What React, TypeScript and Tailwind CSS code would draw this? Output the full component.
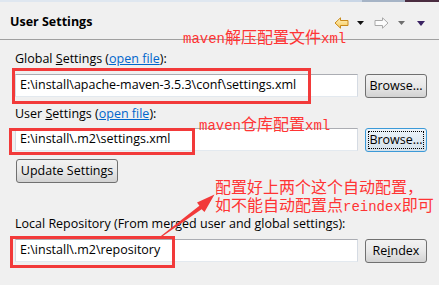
import React from 'react';

function Mono({ children }: { children: React.ReactNode }) {
    return <span className="font-['Liberation_Mono',monospace] text-[14px] leading-[18px]">{children}</span>;
}

function Note({ className, children }: { className: string; children: React.ReactNode }) {
    return (
        <div
            className={`absolute whitespace-nowrap text-[16px] leading-[18px] text-[#ff3434] font-['Noto_Sans_CJK_SC',sans-serif] ${className}`}
        >
            {children}
        </div>
    );
}

function Field({ value }: { value: string }) {
    return (
        <div className="flex-1 h-[23px] bg-white border border-[#abadb3] border-x-[#d5dbe3] border-b-[#e3e9ef] flex items-center pl-[4px] whitespace-nowrap overflow-hidden">
            {value}
        </div>
    );
}

function Button({ label, focused, className = 'w-[62px]' }: { label: React.ReactNode; focused?: boolean; className?: string }) {
    if (focused) {
        return (
            <div className={`h-[24px] ${className} rounded-[3px] border border-[#3c9ad8] bg-gradient-to-b from-[#edf4fa] to-[#d3e0ea] p-[2px]`}>
                <div className="h-full w-full border border-dotted border-black flex items-center justify-center">{label}</div>
            </div>
        );
    }
    return (
        <div
            className={`h-[24px] ${className} rounded-[3px] border border-[#707070] bg-gradient-to-b from-[#f2f2f2] via-[#e8e8e8] to-[#d2d2d2] flex items-center justify-center`}
        >
            {label}
        </div>
    );
}

function Label({ children, className = '' }: { children: React.ReactNode; className?: string }) {
    return <div className={`leading-[16px] ${className}`}>{children}</div>;
}

const Link = () => <span className="text-[#0066cc] underline">open file</span>;

export default function App() {
    return (
        <div className="relative w-[439px] h-[285px] overflow-hidden bg-[#f0f0f0] text-black text-[12.5px] font-['Open_Sans',sans-serif]">
            {/* window edge strip */}
            <div className="flex h-[2px]">
                <div className="w-[340px] bg-[#dfe7f0]" />
                <div className="w-[22px] bg-[#c9d6e6]" />
                <div className="w-[43px] bg-[#a6b4c6]" />
                <div className="flex-1 bg-[#4a2c40]" />
            </div>

            <div className="h-[38px] border-b border-[#a0a0a0] flex items-center justify-between pl-[10px] pr-[14px]">
                <span className="font-bold text-[12.5px] mt-[4px]">User Settings</span>
                <div className="flex items-center mt-[5px]">
                    <svg width="15" height="12" viewBox="0 0 15 12">
                        <defs>
                            <linearGradient id="y" x1="0" y1="0" x2="0" y2="1">
                                <stop offset="0" stopColor="#fff3c4" />
                                <stop offset="1" stopColor="#f6c858" />
                            </linearGradient>
                        </defs>
                        <path d="M1 6 L6.5 0.8 V3.5 H14 V8.5 H6.5 V11.2 Z" fill="url(#y)" stroke="#c98a1c" strokeWidth="1" strokeLinejoin="round" />
                    </svg>
                    <svg width="7" height="4" viewBox="0 0 7 4" className="ml-[8px]">
                        <path d="M0 0 H7 L3.5 4 Z" fill="#111" />
                    </svg>
                    <svg width="15" height="12" viewBox="0 0 15 12" className="ml-[10px]">
                        <path d="M14 6 L8.5 0.8 V3.5 H1 V8.5 H8.5 V11.2 Z" fill="#fcfcfc" stroke="#a8a8a8" strokeWidth="1" strokeLinejoin="round" />
                    </svg>
                    <svg width="7" height="4" viewBox="0 0 7 4" className="ml-[9px]">
                        <path d="M0 0 H7 L3.5 4 Z" fill="#6e6e6e" />
                    </svg>
                    <svg width="8" height="5" viewBox="0 0 8 5" className="ml-[12px]">
                        <path d="M0 0 H8 L4 5 Z" fill="#3b2363" />
                    </svg>
                </div>
            </div>

            <div className="pl-[15px] pr-[12px] flex flex-col">
                <Label className="mt-[11px]">
                    Global <u>S</u>ettings (<Link />):
                </Label>
                <div className="mt-[7px] flex items-start gap-[7px]">
                    <Field value="E:\install\apache-maven-3.5.3\conf\settings.xml" />
                    <Button label="Browse..." />
                </div>

                <Label className="mt-[8px]">
                    User <u>S</u>ettings (<Link />):
                </Label>
                <div className="mt-[6px] flex items-start gap-[7px]">
                    <Field value="E:\install\.m2\settings.xml" />
                    <Button label="Browse..." focused />
                </div>

                <div className="mt-[7px] ml-[1px] flex">
                    <Button label="Update Settings" className="w-[102px]" />
                </div>

                <Label className="mt-[33px]">Local Repository (From merged user and global settings):</Label>
                <div className="mt-[7px] flex items-start gap-[7px]">
                    <Field value="E:\install\.m2\repository" />
                    <Button label={<>Re<u>i</u>ndex</>} />
                </div>
            </div>

            {/* annotations drawn over the page */}
            <div className="absolute left-[12px] top-[68px] w-[299px] h-[36px] border-[3px] border-[#f23a3a]" />
            <div className="absolute left-[9px] top-[128px] w-[186px] h-[27px] border-[3px] border-[#f23a3a]" />
            <div className="absolute left-[10px] top-[236px] w-[165px] h-[32px] border-[3px] border-[#f23a3a]" />

            <Note className="left-[183px] top-[27px]">
                <Mono>maven</Mono>解压配置文件<Mono>xml</Mono>
            </Note>
            <Note className="left-[199px] top-[114px]">
                <Mono>maven</Mono>仓库配置<Mono>xml</Mono>
            </Note>
            <Note className="left-[215px] top-[177px]">
                <div className="h-[18px]">配置好上两个这个自动配置，</div>
                <div className="h-[18px]">
                    如不能自动配置点<Mono>reindex</Mono>即可
                </div>
            </Note>

            <svg className="absolute left-0 top-0 pointer-events-none" width="439" height="285" viewBox="0 0 439 285">
                <path
                    d="M160.7 237.5 L201.6 209.2 L204.5 212 L214.5 194.5 L197 202.5 L199.4 205.8 L160.3 236.5 Z"
                    fill="#f23a3a"
                />
            </svg>
        </div>
    );
}
